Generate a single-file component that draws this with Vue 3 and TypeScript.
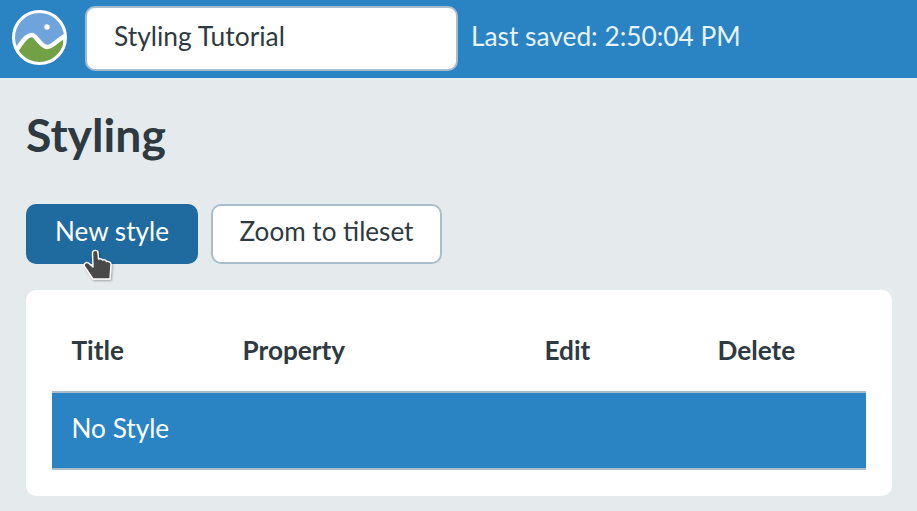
<script setup lang="ts">
const columns: string[] = ['Title', 'Property', 'Edit', 'Delete']
</script>

<template>
  <div class="page">
    <header class="topbar">
      <svg class="logo" width="56" height="56" viewBox="0 0 56 56">
        <defs>
          <clipPath id="disc"><circle cx="27.5" cy="27.5" r="26" /></clipPath>
        </defs>
        <circle cx="27.5" cy="27.5" r="26" fill="#6ea3dc" />
        <g clip-path="url(#disc)">
          <path d="M2 44 L8 35 C12 29 16 25 20 25 C24 25 29 37 35 37 C41 37 46 29 53 26 L56 58 L0 58 Z" fill="#72a045" stroke="#fff" stroke-width="4.5" stroke-linejoin="round" />
        </g>
        <circle cx="27.5" cy="27.5" r="26" fill="none" stroke="#fff" stroke-width="3" />
        <circle cx="35" cy="17" r="2.7" fill="#fff" />
      </svg>
      <div class="title-box">Styling Tutorial</div>
      <span class="saved">Last saved: 2:50:04 PM</span>
    </header>

    <main class="content">
      <h1 class="heading">Styling</h1>
      <div class="actions">
        <button class="btn primary">New style</button>
        <button class="btn secondary">Zoom to tileset</button>
      </div>
      <section class="card">
        <div class="grid head">
          <div v-for="c in columns" :key="c" class="cell">{{ c }}</div>
        </div>
        <div class="grid row">
          <div class="cell">No Style</div>
        </div>
      </section>
    </main>

    <svg class="cursor" width="36" height="38" viewBox="0 0 36 38">
      <defs>
        <filter id="s" x="-30%" y="-30%" width="160%" height="160%">
          <feDropShadow dx="1" dy="1" stdDeviation="1" flood-opacity="0.35" />
        </filter>
      </defs>
      <path filter="url(#s)" d="M12.5 7 C12.5 3.5 18 3.5 18 7 L18.5 13 C20 12.5 22 13 22.5 14 C24 13.5 26 14 26.5 15.5 C28 15 31 16 31 18 L30 33 L13 33 L4.5 20.5 C3 18 6 15.5 8.5 17 L13 21 Z" fill="#4a4a4a" stroke="#fff" stroke-width="1.4" stroke-linejoin="round" />
    </svg>
  </div>
</template>

<style>
html, body { margin: 0; background: #e5eaed; }
</style>

<style scoped>
.page {
  position: relative;
  width: 917px;
  height: 511px;
  overflow: hidden;
  background: #e5eaed;
  font-family: Lato, "Open Sans", sans-serif;
  color: #2e3a42;
}
.topbar {
  height: 78px;
  background: #2a84c4;
  display: flex;
  align-items: flex-start;
  box-sizing: border-box;
  padding: 10px 0 0 12px;
}
.logo { width: 56px; height: 56px; flex: none; }
.title-box {
  margin-left: 17px;
  margin-top: -4px;
  width: 373px;
  height: 65px;
  box-sizing: border-box;
  background: #fff;
  border: 2px solid #a5bccb;
  border-radius: 10px;
  display: flex;
  align-items: center;
  padding: 0 0 5px 27px;
  font-size: 26.4px;
  color: #2e3a42;
}
.saved {
  margin-left: 13px;
  margin-top: 10px;
  font-size: 26.3px;
  color: #e8f3fa;
}
.content { padding: 0 25px 0 26px; }
.heading {
  margin: 0;
  padding-top: 28px;
  height: 96px;
  box-sizing: border-box;
  font-size: 46.3px;
  line-height: 56px;
  font-weight: 700;
  color: #2e3a42;
}
.actions { display: flex; gap: 13px; margin-top: 30px; }
.btn {
  height: 60px;
  box-sizing: border-box;
  border-radius: 10px;
  font-family: inherit;
  font-size: 26.1px;
  padding: 0 0 7px;
}
.primary {
  width: 172px;
  background: #1f6a9f;
  color: #fff;
  border: 0;
}
.secondary {
  width: 231px;
  background: #fff;
  color: #2e3a42;
  border: 2px solid #a9bdca;
}
.card {
  margin-top: 26px;
  height: 206px;
  box-sizing: border-box;
  background: #fff;
  border-radius: 10px;
  padding: 23px 26px 0;
}
.grid {
  display: grid;
  grid-template-columns: 171px 302px 173px 1fr;
  padding-left: 19.5px;
  box-sizing: border-box;
  align-items: center;
}
.head {
  height: 80px;
  padding-bottom: 4px;
  border-bottom: 2px solid #a9bdca;
  font-size: 26.2px;
  font-weight: 700;
}
.row {
  height: 77px;
  padding-bottom: 6px;
  background: #2a84c4;
  border-bottom: 2px solid #a9bdca;
  color: #fff;
  font-size: 26.2px;
}
.cursor { position: absolute; left: 80px; top: 246px; }
</style>
